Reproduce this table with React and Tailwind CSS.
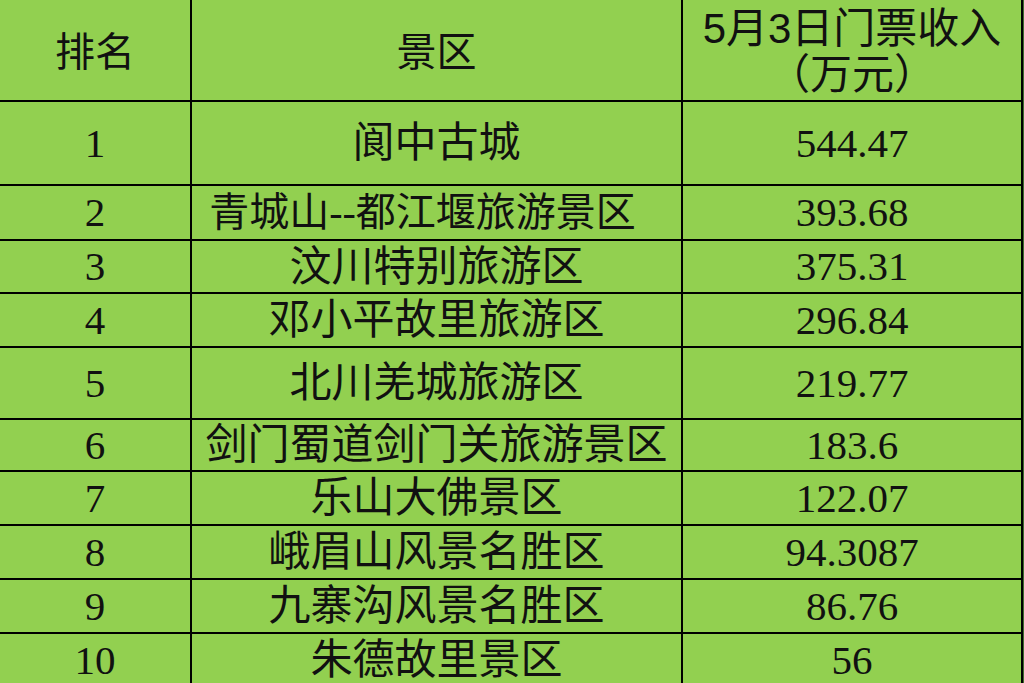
import React from 'react';

// 景区门票收入排行
const rows = [
  { rank: '1', name: '阆中古城', income: '544.47', h: 'h-[84px]' },
  { rank: '2', name: '青城山--都江堰旅游景区', income: '393.68', h: 'h-[55px]', small: true },
  { rank: '3', name: '汶川特别旅游区', income: '375.31', h: 'h-[53px]' },
  { rank: '4', name: '邓小平故里旅游区', income: '296.84', h: 'h-[54px]' },
  { rank: '5', name: '北川羌城旅游区', income: '219.77', h: 'h-[72px]' },
  { rank: '6', name: '剑门蜀道剑门关旅游景区', income: '183.6', h: 'h-[52px]' },
  { rank: '7', name: '乐山大佛景区', income: '122.07', h: 'h-[54px]' },
  { rank: '8', name: '峨眉山风景名胜区', income: '94.3087', h: 'h-[54px]' },
  { rank: '9', name: '九寨沟风景名胜区', income: '86.76', h: 'h-[54px]' },
  { rank: '10', name: '朱德故里景区', income: '56', h: 'h-[54px]' },
];

const serif = "font-['Liberation_Serif','Noto_Sans_CJK_SC',serif]";
const sans = "font-['Liberation_Sans','Noto_Sans_CJK_SC',sans-serif]";

const App = () => {
  return (
    <div className="w-[1024px] h-[683px] overflow-hidden bg-[#3f6e2e]">
      <div className="w-[1023px] bg-[#92d050] text-[#111]">
        {/* Header */}
        <div className={`grid grid-cols-[192px_491px_340px] h-[102px] border-b-2 border-black ${sans}`}>
          <div className="flex items-center justify-center border-r-2 border-black text-[40px] leading-none pt-1">
            排名
          </div>
          <div className="flex items-center justify-center border-r-2 border-black text-[40px] leading-none pt-1">
            景区
          </div>
          <div className="flex flex-col items-center justify-center border-r-2 border-black text-[42px] leading-[46px] pt-1">
            <span>5月3日门票收入</span>
            <span>（万元）</span>
          </div>
        </div>

        {rows.map((r) => (
          <div
            key={r.rank}
            className={`grid grid-cols-[192px_491px_340px] ${r.h} border-b-2 border-black ${serif}`}
          >
            <div className="flex items-center justify-center border-r-2 border-black text-[41px] leading-none">
              {r.rank}
            </div>
            <div
              className={`flex items-center justify-center border-r-2 border-black leading-none whitespace-nowrap ${
                r.small ? 'text-[40px] pr-7' : 'text-[42px]'
              }`}
            >
              {r.name}
            </div>
            <div className="flex items-center justify-center border-r-2 border-black text-[41px] leading-none">
              {r.income}
            </div>
          </div>
        ))}
      </div>
    </div>
  );
};

export default App;
